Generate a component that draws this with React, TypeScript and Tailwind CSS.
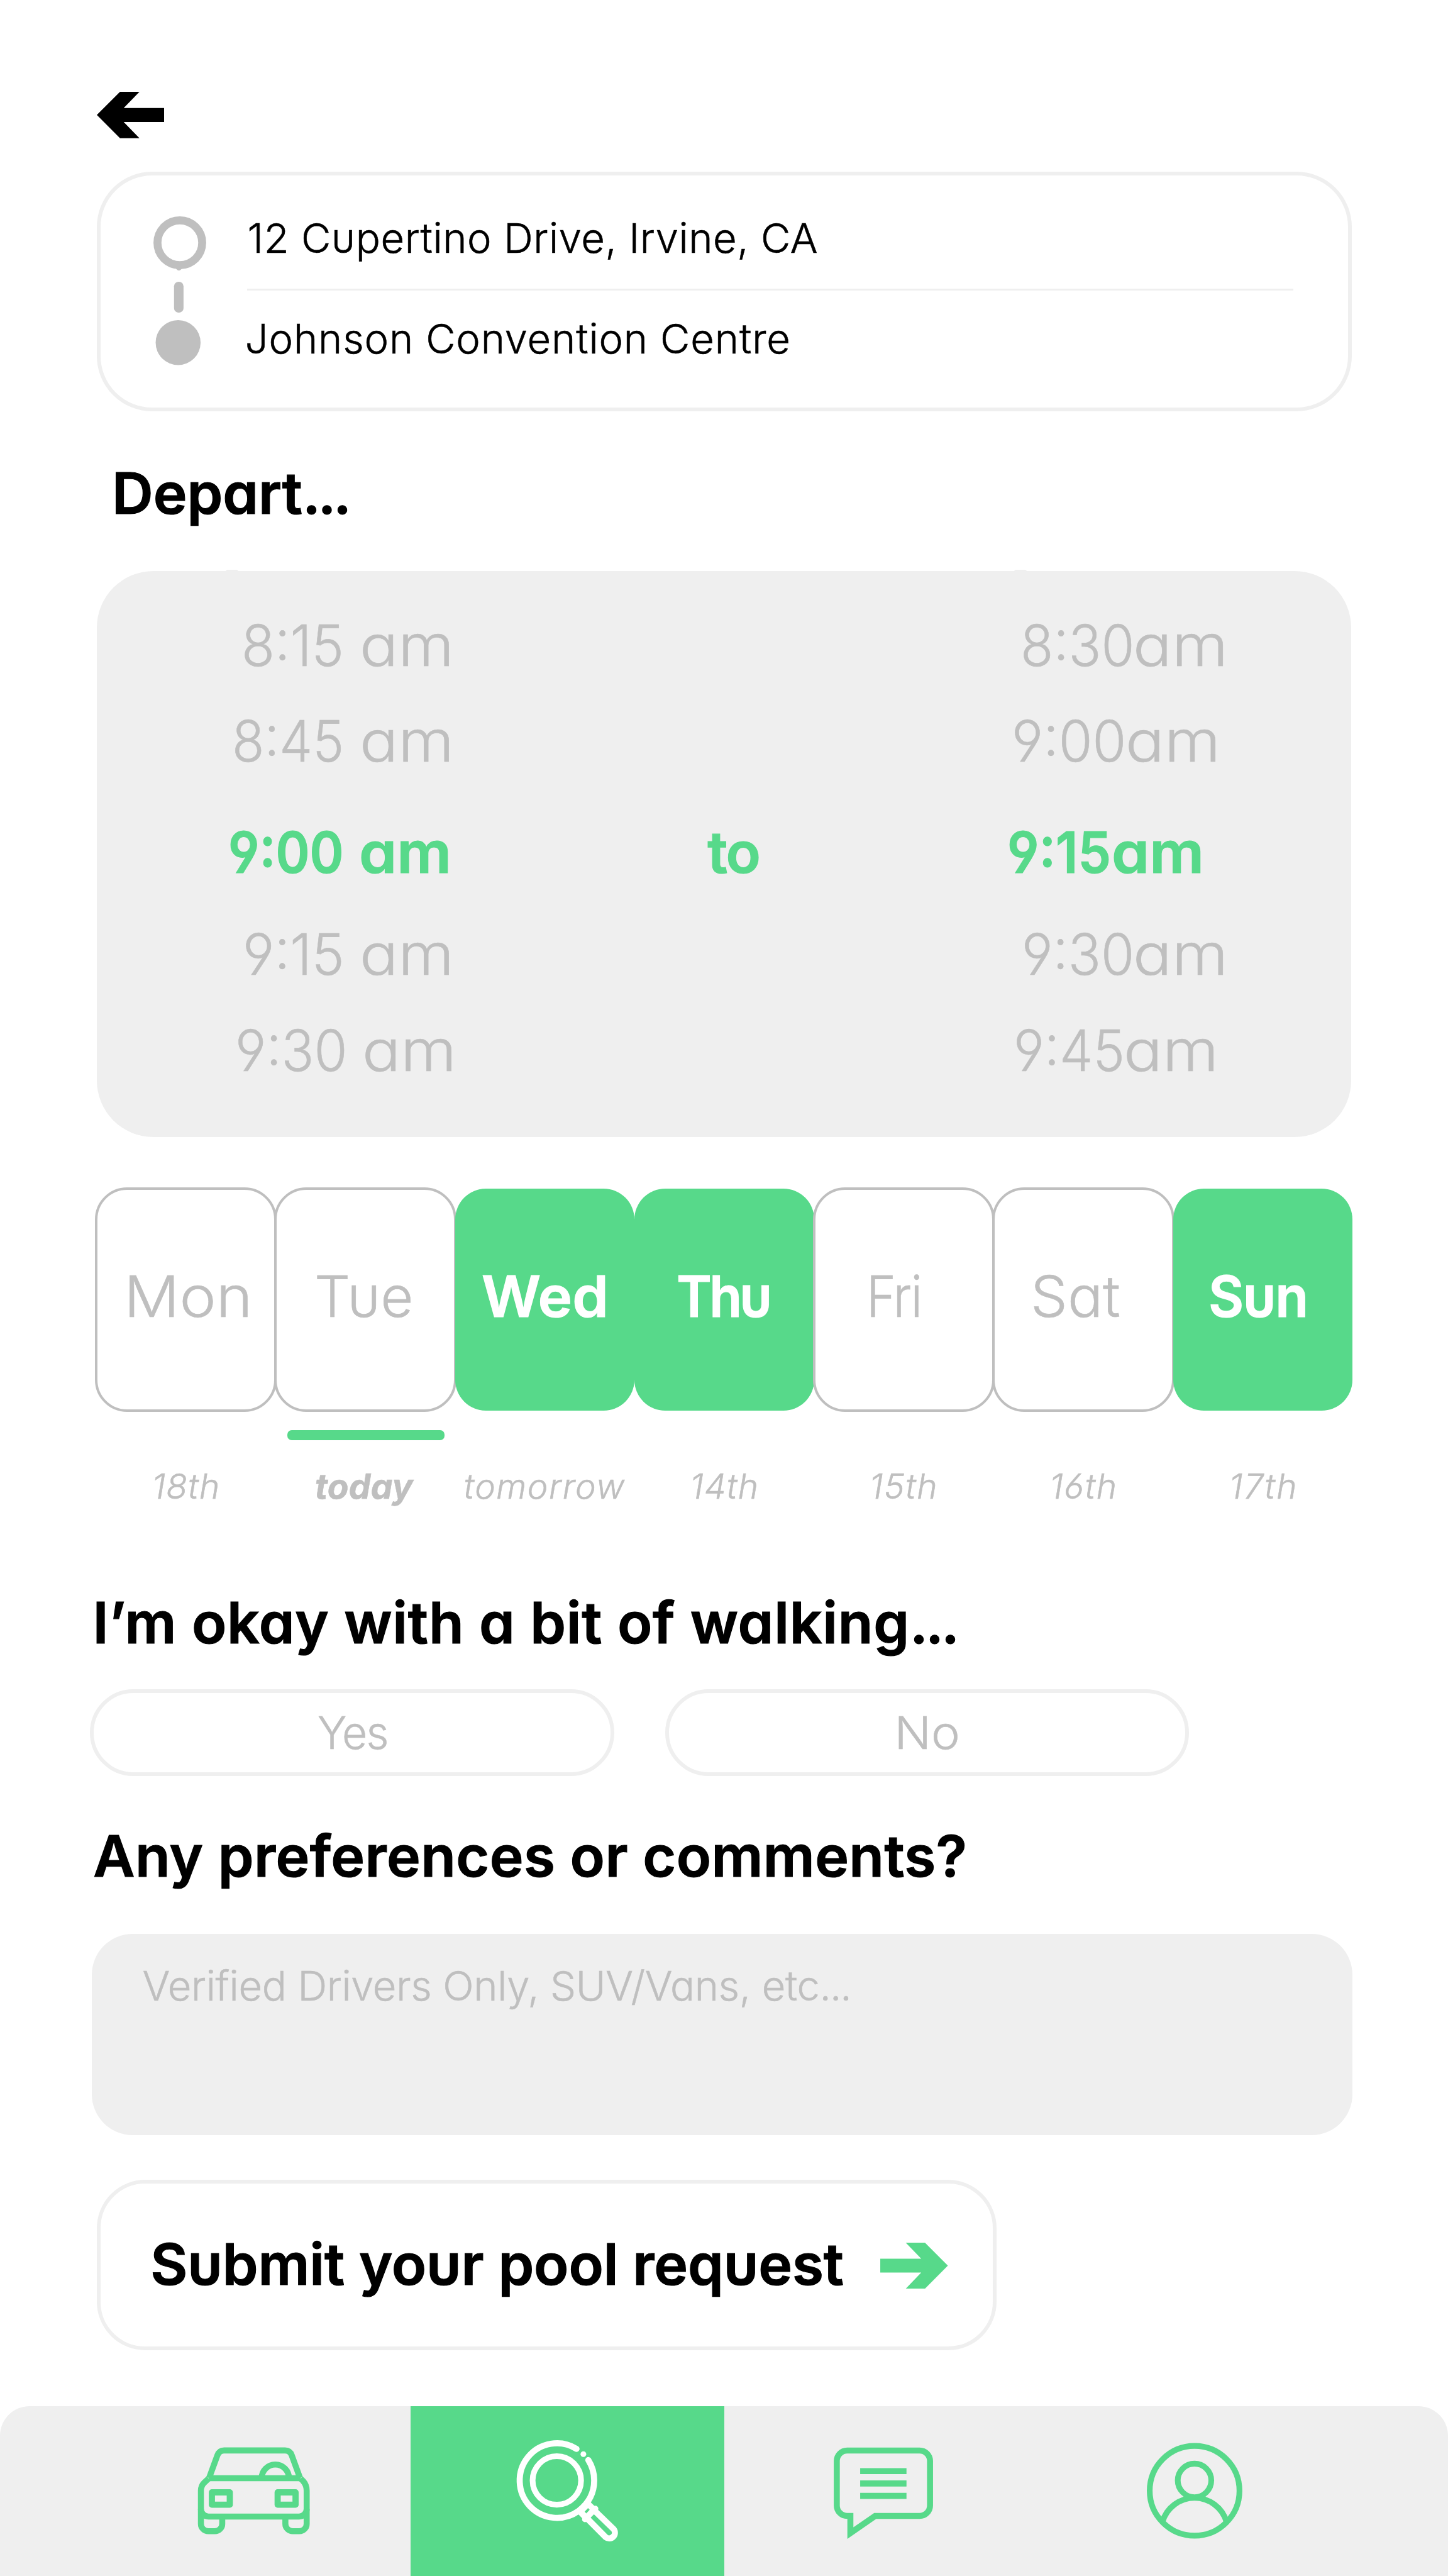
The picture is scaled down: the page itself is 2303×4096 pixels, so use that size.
const GREEN = "#57d98a";

type TimeRow = {
  from: string;
  to: string;
  fromClass: string;
  fromScale: string;
  toClass: string;
  toScale: string;
  rowClass: string;
  active?: boolean;
};

const timeRows: TimeRow[] = [
  {
    from: "8:15",
    to: "8:30",
    fromClass: "ml-[230.2px] w-[187.7px]",
    fromScale: "scale-x-[0.953]",
    toClass: "ml-[21.3px] w-[179.9px]",
    toScale: "scale-x-[0.942]",
    rowClass: "mt-[73px]",
  },
  {
    from: "8:45",
    to: "9:00",
    fromClass: "ml-[214.8px] w-[203.1px]",
    fromScale: "scale-x-[0.926]",
    toClass: "ml-[7.3px] w-[181.9px]",
    toScale: "scale-x-[0.957]",
    rowClass: "mt-[60.7px]",
  },
  {
    from: "9:00",
    to: "9:15",
    fromClass: "ml-[209.4px] w-[207.6px]",
    fromScale: "scale-x-[0.9]",
    toClass: "ml-[0.4px] w-[166.1px]",
    toScale: "scale-x-[0.918]",
    rowClass: "mt-[86px]",
    active: true,
  },
  {
    from: "9:15",
    to: "9:30",
    fromClass: "ml-[231.7px] w-[186.2px]",
    fromScale: "scale-x-[0.963]",
    toClass: "ml-[23.5px] w-[177.7px]",
    toScale: "scale-x-[0.946]",
    rowClass: "mt-[71.3px]",
  },
  {
    from: "9:30",
    to: "9:45",
    fromClass: "ml-[219.6px] w-[202.5px]",
    fromScale: "scale-x-[0.943]",
    toClass: "ml-[10.6px] w-[175.1px]",
    toScale: "scale-x-[0.935]",
    rowClass: "mt-[61.2px]",
  },
];

type Day = {
  name: string;
  date: string;
  selected?: boolean;
  today?: boolean;
  nameClass: string;
  dateClass: string;
};

const days: Day[] = [
  { name: "Mon", date: "18th", nameClass: "ml-[44px] scale-x-[1.08]", dateClass: "pl-[88.5px] tracking-[1.3px]" },
  { name: "Tue", date: "today", today: true, nameClass: "ml-[62px] scale-x-[0.99]", dateClass: "pl-[62.6px] tracking-[0.2px]" },
  { name: "Wed", date: "tomorrow", selected: true, nameClass: "ml-[42.1px] scale-x-[1.015]", dateClass: "pl-[13.8px] tracking-[1.5px]" },
  { name: "Thu", date: "14th", selected: true, nameClass: "ml-[66.3px] scale-x-[0.93] tracking-[-4px]", dateClass: "pl-[88px] tracking-[1.2px]" },
  { name: "Fri", date: "15th", nameClass: "ml-[83px] scale-x-[0.88] tracking-[-2px]", dateClass: "pl-[88px] tracking-[1.6px]" },
  { name: "Sat", date: "16th", nameClass: "ml-[58.6px] scale-x-[1.024]", dateClass: "pl-[89px] tracking-[1.6px]" },
  { name: "Sun", date: "17th", selected: true, nameClass: "ml-[56.4px] scale-x-[0.95] tracking-[-1.5px]", dateClass: "pl-[89px] tracking-[2.2px]" },
];

function BackArrow() {
  return (
    <svg className="block h-[73.7px] w-[107.6px]" viewBox="208 198 146 100">
      <path d="M208 248L258 198H300L266 233H354V263H266L300 298H258Z" fill="#000" />
    </svg>
  );
}

function ForwardArrow() {
  return (
    <svg className="block h-[73.2px] w-[107.6px]" viewBox="0 0 146 99.4">
      <path d="M146 49.7L96.5 0H55L88.5 34.7H0V64.4H88.5L55 99.4H96.5Z" fill={GREEN} />
    </svg>
  );
}

function RouteMarks() {
  return (
    <svg className="block h-[236.5px] w-[84px] shrink-0" viewBox="331 467 114 321" fill="#bfbfbf">
      <circle cx="388" cy="524" r="48.3" fill="none" stroke="#bfbfbf" strokeWidth="17.2" />
      <path d="M376 574q10 20 20 0z" />
      <rect x="375.5" y="608" width="20.5" height="67" rx="10" />
      <circle cx="384.3" cy="739.5" r="48.5" />
    </svg>
  );
}

function CarIcon() {
  return (
    <svg className="block h-[191.5px] w-[221px]" viewBox="0 0 900 780" fill="none" stroke={GREEN} strokeWidth="39">
      <path d="M153 322L207 175Q219 144 250 144H645Q677 144 688 175L742 322" />
      <path d="M150 324H746" />
      <path d="M150 326L122 352Q100 374 100 404V620a48 47 0 0 0 48 47H190a48 47 0 0 0 48 -47V572" />
      <path d="M746 326L762 342Q785 368 785 404V620a48 47 0 0 1 -48 47H695a48 47 0 0 1 -48 -47V572" />
      <path d="M100 523a49 49 0 0 0 49 49H736a49 49 0 0 0 49 -49" />
      <rect x="171" y="415.5" width="116" height="80" strokeWidth="40" strokeLinejoin="round" />
      <rect x="597" y="415.5" width="116" height="80" strokeWidth="40" strokeLinejoin="round" />
      <path d="M493.5 324a88.5 88.5 0 0 1 177 0" />
    </svg>
  );
}

function SearchIcon() {
  return (
    <svg className="block h-[213.6px] w-[221px]" viewBox="0 0 900 870" fill="none" stroke="#fff" strokeWidth="39.5">
      <path d="M492.5 162A241.5 241.5 0 1 0 507 563.5Q607 487 607 367Q607 295 569 235" strokeLinecap="round" />
      <circle cx="365" cy="367" r="157" strokeWidth="37" />
      <circle cx="537" cy="196.5" r="18.5" fill="#fff" stroke="none" />
      <path
        d="M583 507L628 550L547 630L503 585ZM567 546L545 569L556 580L578 557Z"
        fill="#fff"
        fillRule="evenodd"
        stroke="none"
      />
      <path d="M547 618L615 550" strokeLinecap="round" strokeWidth="38" />
      <path d="M611 564L733 682A37 37 0 0 1 681 734L562 614" />
    </svg>
  );
}

function ChatIcon() {
  return (
    <svg className="block h-[199px] w-[213.6px]" viewBox="0 0 870 810" fill="none" stroke={GREEN} strokeWidth="39">
      <path d="M197.5 568H177A67.5 67.5 0 0 1 109.5 500.5V212A67.5 67.5 0 0 1 177 144.5H646A67.5 67.5 0 0 1 713.5 212V500.5A67.5 67.5 0 0 1 646 568H358L197.5 679V568Z" />
      <path d="M261 277.5H561M261 357.5H561M261 438H561" />
    </svg>
  );
}

function ProfileIcon() {
  return (
    <svg className="block h-[199px] w-[199px]" viewBox="0 0 810 810" fill="none" stroke={GREEN} strokeWidth="37">
      <circle cx="386.5" cy="405" r="290.5" />
      <circle cx="386" cy="338" r="108.5" />
      <path d="M179 605A216 216 0 0 1 593 605" />
    </svg>
  );
}

export default function App() {
  return (
    <div className="flex h-[4096px] w-[2303px] flex-col overflow-hidden bg-white font-['Inter',sans-serif] text-[91px] leading-none font-light whitespace-pre text-black [font-feature-settings:'cv11','cv06','cv04','cv03'] [-webkit-text-stroke-width:0.6px]">
      <button className="mt-[146px] ml-[153.6px] block self-start" aria-label="Back">
        <BackArrow />
      </button>

      <section className="mt-[53.6px] ml-[153.6px] flex h-[381px] w-[1996px] rounded-[88px] border-[6px] border-[#efefef] pt-[64.8px] pl-[84.3px]">
        <RouteMarks />
        <div className="ml-[65.6px] flex flex-col text-[65px]">
          <div className="mt-[2px] tracking-[0.57px]">12 Cupertino Drive, Irvine, CA</div>
          <div className="mt-[48px] h-[3px] w-[1664px] bg-[#efefef]" />
          <div className="mt-[44px] ml-[-3.7px] tracking-[0.86px]">Johnson Convention Centre</div>
        </div>
      </section>

      <h2 className="mt-[85.2px] ml-[178px] font-semibold tracking-[0px] [-webkit-text-stroke-width:1.2px]">
        Depart<span className="tracking-[-4.5px]">...</span>
      </h2>

      <section className="relative mt-[77.9px] ml-[154px] flex h-[899.5px] w-[1995px] flex-col rounded-[90px] bg-[#efefef] text-[#bfbfbf]">
        <div className="absolute top-[-2.5px] left-[205px] h-[6px] w-[20px] rounded-full bg-[#efefef]" />
        <div className="absolute top-[-2.5px] left-[1459px] h-[6px] w-[20px] rounded-full bg-[#efefef]" />
        {timeRows.map((row) => (
          <div
            key={row.from}
            className={`grid h-[91px] grid-cols-[971.3px_476px_1fr] ${row.rowClass} ${row.active ? "font-semibold text-[#57d98a] [-webkit-text-stroke-width:1.2px]" : ""}`}
          >
            <div className="flex">
              <span className={`shrink-0 ${row.fromClass}`}>
                <span className={`inline-block origin-left ${row.fromScale}`}>{row.from}</span>{" "}
              </span>
              <span className={`inline-block origin-left ${row.active ? "scale-x-[1.06]" : "scale-x-[1.12]"}`}>am</span>
            </div>
            <span className="tracking-[-2px]">{row.active ? "to" : ""}</span>
            <div className="flex">
              <span className={`shrink-0 ${row.toClass}`}>
                <span className={`inline-block origin-left ${row.toScale}`}>{row.to}</span>
              </span>
              <span className={`inline-block origin-left ${row.active ? "scale-x-[1.06]" : "scale-x-[1.128]"}`}>am</span>
            </div>
          </div>
        ))}
      </section>

      <section className="mt-[81.9px] ml-[152.9px] flex">
        {days.map((day) => (
          <div key={day.name} className="flex w-[285.48px] flex-col">
            {day.selected ? (
              <div className="h-[353.4px] rounded-[49px] bg-[#57d98a] pt-[126.7px] font-semibold text-white [-webkit-text-stroke-width:1.2px]">
                <span className={`inline-block origin-left ${day.nameClass}`}>{day.name}</span>
              </div>
            ) : (
              <div className="-m-[2px] h-[357.4px] rounded-[51px] border-[4px] border-[#bfbfbf] bg-white pt-[124.7px] text-[#bfbfbf]">
                <div className="-ml-[2px]">
                  <span className={`inline-block origin-left ${day.nameClass}`}>{day.name}</span>
                </div>
              </div>
            )}
            <div
              className={`mt-[31px] ml-[18.8px] h-[16px] w-[249.5px] rounded-[7px] ${day.today ? "bg-[#57d98a]" : ""}`}
            />
            <div className={`mt-[46px] text-[55px] text-[#bfbfbf] italic ${day.today ? "font-bold" : ""} ${day.dateClass}`}>
              {day.date}
            </div>
          </div>
        ))}
      </section>

      <h2 className="mt-[144.2px] ml-[147.5px] font-semibold tracking-[0.75px] [-webkit-text-stroke-width:1.2px]">
        I’m okay with a bit of walking<span className="tracking-[-4px]">...</span>
      </h2>

      <div className="mt-[59.9px] ml-[143.4px] flex gap-[80.9px] text-[72px] text-[#bfbfbf]">
        <button className="flex h-[138.2px] w-[834px] items-center justify-center rounded-full border-[6px] border-[#efefef]">
          <span className="inline-block scale-x-[0.965] tracking-[-2px]">Yes</span>
        </button>
        <button className="flex h-[138.2px] w-[833px] items-center justify-center rounded-full border-[6px] border-[#efefef]">
          <span className="inline-block scale-x-[1.072]">No</span>
        </button>
      </div>

      <h2 className="mt-[81.8px] ml-[148.3px] font-semibold tracking-[0.4px] [-webkit-text-stroke-width:1.2px]">
        Any preferences or comments?
      </h2>

      <div className="mt-[78px] ml-[145.9px] h-[320px] w-[2005.3px] rounded-[65px] bg-[#efefef] pt-[49.5px] pl-[80.7px] text-[65px] tracking-[-0.35px] text-[#bfbfbf]">
        Verified Drivers Only, SUV/Vans, etc<span className="tracking-[-2px]">...</span>
      </div>

      <button className="mt-[71px] ml-[154px] flex h-[270.4px] w-[1430.7px] items-start rounded-[77px] border-[6px] border-[#efefef] pt-[82.6px] pl-[79.2px] text-left">
        <span className="w-[1161px] font-semibold tracking-[-0.1px] [-webkit-text-stroke-width:1.2px]">
          Submit your pool request
        </span>
        <span className="mt-[11.4px]">
          <ForwardArrow />
        </span>
      </button>

      <nav className="mt-[89.1px] flex min-h-0 flex-1 rounded-t-[47px] bg-[#efefef]">
        <div className="w-[653.2px] pt-[35.4px] pl-[294.7px]">
          <CarIcon />
        </div>
        <div className="w-[498.4px] bg-[#57d98a] pt-[28px] pl-[142.5px]">
          <SearchIcon />
        </div>
        <div className="flex gap-[287.4px] pt-[35.4px] pl-[152.4px]">
          <ChatIcon />
          <ProfileIcon />
        </div>
      </nav>
    </div>
  );
}
